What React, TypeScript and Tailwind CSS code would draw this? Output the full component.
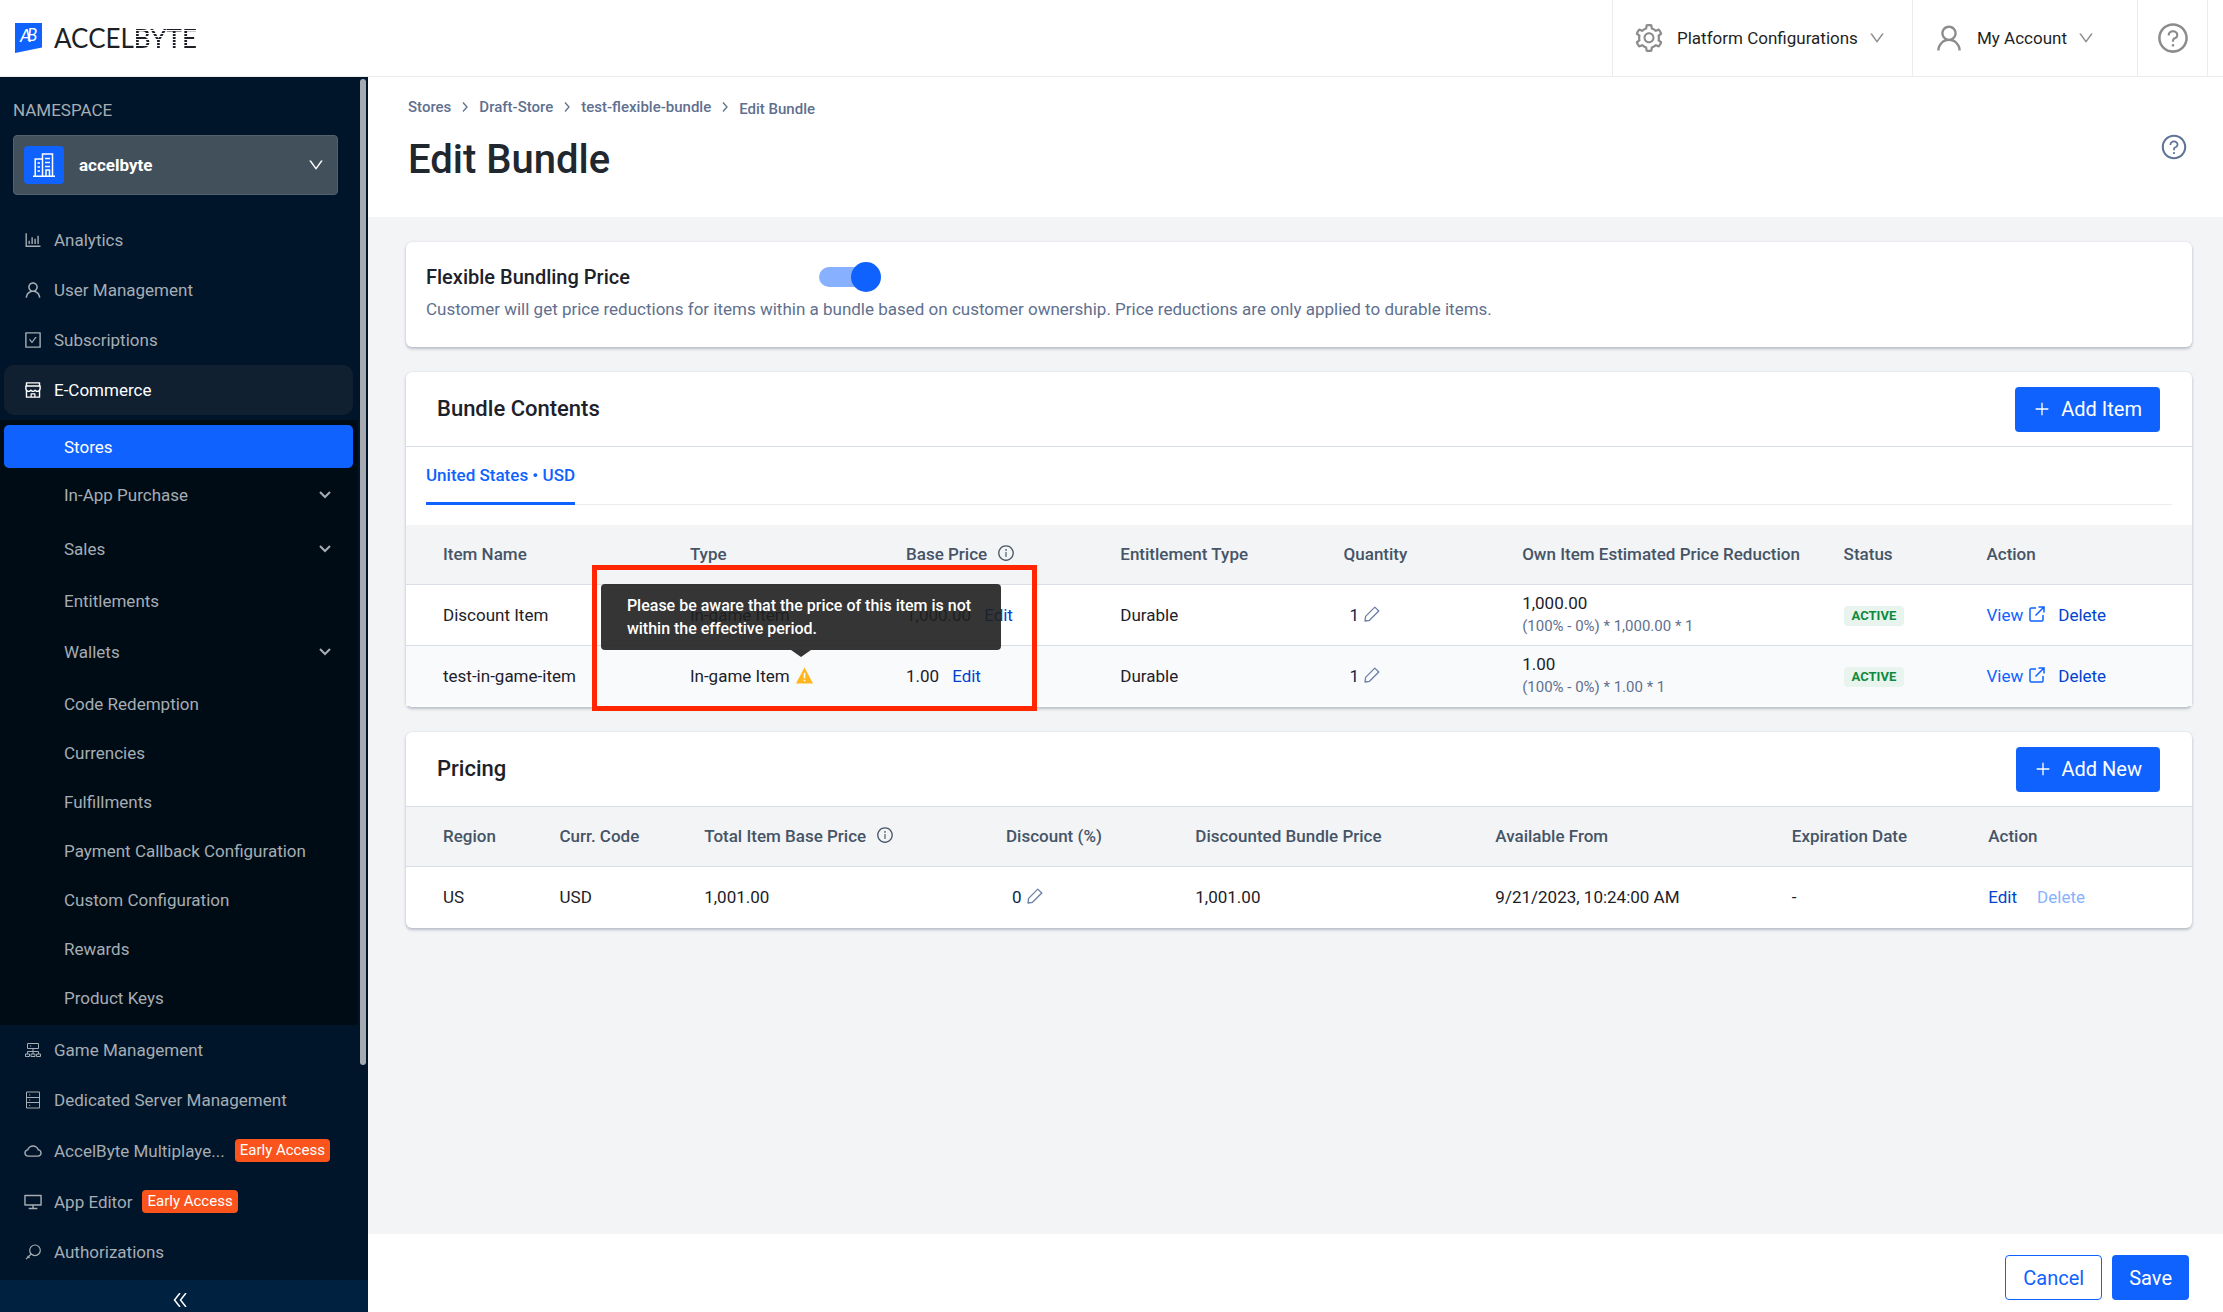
import type { ReactNode } from "react";
import {
  AiOutlineBarChart,
  AiOutlineUser,
  AiOutlineCheckSquare,
  AiOutlineShop,
  AiOutlineCloud,
  AiOutlineDesktop,
  AiOutlineInfoCircle,
  AiOutlineQuestionCircle,
  AiOutlineSetting,
  AiOutlinePlus,
  AiOutlineDown,
} from "react-icons/ai";

function BuildingIcon() {
  return (
    <svg viewBox="0 0 22 24" className="h-6 w-[22px]" fill="none" stroke="currentColor" strokeWidth="1.5">
      <path d="M0 23.2h22M2.2 23V6H9M9.5 23V1h10v22M13 23v-6h3.5v6M12 5.5h5M12 9.5h5M12 13.5h5M4.500 10h2.500M4.500 14h2.500M4.500 18h2.500" />
    </svg>
  );
}

function ClusterIcon() {
  return (
    <svg viewBox="0 0 16 16" className="h-4 w-4" fill="none" stroke="currentColor">
      <path d="M2.500 1.500h11v5h-11zM8 6.500V12M2.500 12V9.500h11V12M.5 12h4v2.500h-4zM6 12h4v2.500H6zM11.500 12h4v2.500h-4zM5 4h1.200" />
    </svg>
  );
}

function ServerIcon() {
  return (
    <svg viewBox="0 0 16 18" className="h-[18px] w-4" fill="none" stroke="currentColor">
      <path d="M1.500 1h13v16h-13zM1.500 6.500h13M1.500 11.500h13M4 4h1.200M4 9h1.200M4 14.300h1.200" />
    </svg>
  );
}

function KeyIcon() {
  return (
    <svg viewBox="0 0 16 16" className="h-4 w-4" fill="none" stroke="currentColor" strokeWidth="1.200">
      <circle cx="10" cy="6.300" r="5.300" />
      <path d="M6.200 10L1 15.200M2.500 12l2 2" />
    </svg>
  );
}

function SmallChevron() {
  return (
    <svg viewBox="0 0 12 8" className="h-2 w-3" fill="none" stroke="currentColor" strokeWidth="2">
      <path d="M1 1l5 5 5-5" />
    </svg>
  );
}

function PencilIcon() {
  return (
    <svg viewBox="0 0 16 16" className="mb-[2px] h-4 w-4 text-[#6b7fa8]" fill="none" stroke="currentColor" strokeWidth="1.300">
      <path d="M1 15l.6-4.600 9.200-9.300 4 3.900-9.300 9.300z" strokeLinejoin="round" />
    </svg>
  );
}

function ExternalIcon() {
  return (
    <svg viewBox="0 0 16 16" className="mb-[2px] h-4 w-4" fill="none" stroke="currentColor" strokeWidth="1.500">
      <path d="M7 2H2.200Q1 2 1 3.200v10.600Q1 15 2.200 15h10.600q1.200 0 1.200-1.200V9M9.500 1H15v5.500M15 1L6.500 9.500" />
    </svg>
  );
}

function WarningIcon() {
  return (
    <svg viewBox="0 0 16 16" className="h-[17px] w-[17px]">
      <path d="M8 .5L16 15.500H0z" fill="#ffb61e" />
      <path d="M8 5.500v5M8 12v1.500" stroke="#fff" strokeWidth="1.500" />
    </svg>
  );
}

function Logo() {
  return (
    <a href="#" className="flex items-center gap-3 pl-[15px] text-[#1c1f26]">
      <svg viewBox="0 0 27 30" className="h-[30px] w-[27px]" aria-hidden="true">
        <path d="M0 0h27v24.500L0 30z" fill="#0f62fe" />
        <text x="5" y="19" fontSize="18" fontFamily="Lato" fontStyle="italic" fill="#fff">A</text>
        <text x="12" y="18" fontSize="17" fontFamily="Lato" fontStyle="italic" fill="#fff">B</text>
      </svg>
      <span className="font-[Lato,sans-serif] text-[26px] leading-8">
        ACCEL
        <span className="bg-[repeating-linear-gradient(#1c1f26_0_2px,#ffffff_2px_3px)] bg-clip-text font-medium text-transparent">
          BYTE
        </span>
      </span>
    </a>
  );
}

function TopBar() {
  return (
    <header className="flex h-[77px] shrink-0 items-stretch border-b border-[#ececec] bg-white">
      <Logo />
      <div className="ml-auto flex pr-[15px] text-[#1f1f1f]">
        <button className="flex w-[300px] items-center border-l border-[#ececec] pl-5">
          <AiOutlineSetting className="h-8 w-8 text-[#8c8c8c]" />
          <span className="ml-3">Platform Configurations</span>
          <AiOutlineDown className="ml-[10px] h-[18px] w-[18px] text-[#8c8c8c]" />
        </button>
        <button className="flex w-[225px] items-center border-l border-[#ececec] pl-5">
          <AiOutlineUser className="h-8 w-8 text-[#8c8c8c]" />
          <span className="ml-3">My Account</span>
          <AiOutlineDown className="ml-[10px] h-[18px] w-[18px] text-[#8c8c8c]" />
        </button>
        <button aria-label="Help" className="flex w-[71px] items-center justify-center border-x border-[#ececec]">
          <AiOutlineQuestionCircle className="h-[34px] w-[34px] text-[#8c8c8c]" />
        </button>
      </div>
    </header>
  );
}

const subItems = [
  { label: "In-App Purchase", expandable: true },
  { label: "Sales", expandable: true },
  { label: "Entitlements" },
  { label: "Wallets", expandable: true },
  { label: "Code Redemption" },
  { label: "Currencies" },
  { label: "Fulfillments" },
  { label: "Payment Callback Configuration" },
  { label: "Custom Configuration" },
  { label: "Rewards" },
  { label: "Product Keys" },
];

function MenuItem({ icon, label, early = false }: { icon: ReactNode; label: string; early?: boolean }) {
  return (
    <a href="#" className={early ? "flex h-[51px] items-center pl-[23px]" : "flex h-[50px] items-center pl-[23px]"}>
      <span className="flex w-5 justify-center">{icon}</span>
      <span className="ml-[11px]">{label}</span>
      {early && (
        <span className="ml-[10px] rounded bg-[#fa541c] px-[5px] text-[15px] leading-[23px] text-white">
          Early Access
        </span>
      )}
    </a>
  );
}

function Sidebar() {
  return (
    <aside className="flex w-[368px] shrink-0 flex-col bg-[#001529] text-[#a6adb4]">
      <div className="flex min-h-0 flex-1 justify-between overflow-hidden">
        <div className="w-[358px]">
          <div className="px-[13px] pt-[21px]">
            <p className="leading-6">NAMESPACE</p>
            <button className="mt-[13px] flex h-[60px] w-[325px] items-center rounded border border-[#53616e] bg-[#42505c] pr-3 pl-[10px] text-white">
              <span className="flex h-[38px] w-10 items-center justify-center rounded-sm bg-[#0f62fe]">
                <BuildingIcon />
              </span>
              <span className="ml-[15px] font-bold">accelbyte</span>
              <AiOutlineDown className="ml-auto h-[18px] w-[18px]" />
            </button>
          </div>
          <nav className="mt-5">
            <MenuItem icon={<AiOutlineBarChart className="h-5 w-5" />} label="Analytics" />
            <MenuItem icon={<AiOutlineUser className="h-5 w-5" />} label="User Management" />
            <MenuItem icon={<AiOutlineCheckSquare className="h-5 w-5" />} label="Subscriptions" />
            <a
              href="#"
              className="mr-[5px] ml-1 flex h-[50px] items-center rounded-[10px] bg-[#112031] pl-[19px] text-white"
            >
              <AiOutlineShop className="h-5 w-5" />
              <span className="ml-[11px]">E-Commerce</span>
            </a>
            <div className="mt-[5px] bg-[#000c15] pt-[5px] pb-[3px]">
              <a
                href="#"
                className="mr-[5px] ml-1 flex h-[43px] items-center rounded-[5px] bg-[#0f62fe] pl-[60px] text-white"
              >
                Stores
              </a>
              {subItems.map((item) => (
                <a
                  key={item.label}
                  href="#"
                  className={
                    item.expandable
                      ? "flex h-[54px] items-center justify-between pr-[27px] pl-16"
                      : "flex h-[49px] items-center pl-16"
                  }
                >
                  {item.label}
                  {item.expandable && <SmallChevron />}
                </a>
              ))}
            </div>
            <MenuItem icon={<ClusterIcon />} label="Game Management" />
            <MenuItem icon={<ServerIcon />} label="Dedicated Server Management" />
            <MenuItem icon={<AiOutlineCloud className="h-5 w-5" />} label="AccelByte Multiplaye..." early />
            <MenuItem icon={<AiOutlineDesktop className="h-5 w-5" />} label="App Editor" early />
            <MenuItem icon={<KeyIcon />} label="Authorizations" />
          </nav>
        </div>
        <div className="mt-[2px] mr-[2px] h-[82%] w-[6px] rounded-full bg-[#a5abb1]" />
      </div>
      <button aria-label="Collapse" className="flex h-8 shrink-0 items-center justify-center bg-[#002140] pt-2 pr-2 text-white">
        <svg viewBox="0 0 14 14" className="h-[14px] w-[14px]" fill="none" stroke="currentColor" strokeWidth="1.500">
          <path d="M7 0L1.500 7 7 14M13 0L7.500 7l5.500 7" />
        </svg>
      </button>
    </aside>
  );
}

function Crumb({ label }: { label: string }) {
  return (
    <>
      <a href="#">{label}</a>
      <svg viewBox="0 0 6 10" className="mx-[11px] h-[10px] w-[6px]" fill="none" stroke="currentColor" strokeWidth="1.300">
        <path d="M1 .5L5 5 1 9.500" />
      </svg>
    </>
  );
}

function PageHeader() {
  return (
    <div className="flex h-[140px] shrink-0 justify-between bg-white pr-[35px] pl-10">
      <div>
        <nav className="mt-[18px] flex items-center text-[15px] leading-5 font-medium text-[#5f708f]">
          <Crumb label="Stores" />
          <Crumb label="Draft-Store" />
          <Crumb label="test-flexible-bundle" />
          <span className="pt-1">Edit Bundle</span>
        </nav>
        <h1 className="mt-4 text-[40px] leading-[50px] font-medium text-[#21272e]">Edit Bundle</h1>
      </div>
      <button aria-label="Page help" className="mt-14 h-7 w-7 text-[#5f7396]">
        <AiOutlineQuestionCircle className="h-7 w-7" />
      </button>
    </div>
  );
}

function Card({ children }: { children: ReactNode }) {
  return (
    <section className="mb-[25px] rounded-md bg-white pb-px shadow-[0_2px_3px_#b9bec8,0_0_2px_#d5d8df]">
      {children}
    </section>
  );
}

function CardHeader({ title, action }: { title: string; action: string }) {
  return (
    <div className="flex h-[75px] items-center justify-between border-b border-[#d9dde5] pr-8 pl-[31px]">
      <h2 className="text-[22px] font-medium">{title}</h2>
      <button className="flex h-[45px] items-center gap-[10px] rounded bg-[#0f62fe] px-[18px] text-xl text-white">
        <AiOutlinePlus className="h-[18px] w-[18px]" />
        {action}
      </button>
    </div>
  );
}

function Th({ children, first = false }: { children: ReactNode; first?: boolean }) {
  return (
    <th className={first ? "h-[59px] pl-[37px] font-medium" : "h-[59px] pl-4 font-medium"}>
      <span className="flex items-center whitespace-nowrap">{children}</span>
    </th>
  );
}

function Editable({ value, label }: { value: string; label: string }) {
  return (
    <button aria-label={label} className="ml-[6px] flex items-center gap-[5px] text-[#0b1f4d]">
      {value}
      <PencilIcon />
    </button>
  );
}

const items = [
  { name: "Discount Item", price: "1,000.00", formula: "(100% - 0%) * 1,000.00 * 1" },
  { name: "test-in-game-item", price: "1.00", formula: "(100% - 0%) * 1.00 * 1", warning: true },
];

function PriceWarning() {
  return (
    <>
      <div
        role="tooltip"
        className="absolute bottom-[56px] -left-[73px] z-10 w-[400px] rounded bg-[#1f1f1f]/90 px-[26px] py-[10px] text-base leading-[23px] font-medium text-white"
      >
        Please be aware that the price of this item is not within the effective period.
        <svg viewBox="0 0 20 7" className="absolute top-full left-[190px] h-[7px] w-5">
          <path d="M0 0h20L10 7z" fill="#1f1f1f" fillOpacity=".9" />
        </svg>
      </div>
      <div className="pointer-events-none absolute -top-[81px] -left-[82px] z-20 h-[146px] w-[445px] border-[5px] border-[#ff2600]" />
    </>
  );
}

function BundleTable() {
  return (
    <table className="w-full table-fixed text-left">
      <colgroup>
        <col className="w-[15%]" />
        <col className="w-[12.1%]" />
        <col className="w-[12%]" />
        <col className="w-[12.5%]" />
        <col className="w-[10%]" />
        <col className="w-[18%]" />
        <col className="w-[8%]" />
        <col />
      </colgroup>
      <thead className="border-b border-[#d9dde5] bg-[#f3f4f6] text-[#465467]">
        <tr>
          <Th first>Item Name</Th>
          <Th>Type</Th>
          <Th>
            Base Price
            <AiOutlineInfoCircle className="mb-[3px] ml-[10px] h-[18px] w-[18px]" />
          </Th>
          <Th>Entitlement Type</Th>
          <Th>Quantity</Th>
          <Th>Own Item Estimated Price Reduction</Th>
          <Th>Status</Th>
          <Th>Action</Th>
        </tr>
      </thead>
      <tbody>
        {items.map((item) => (
          <tr key={item.name} className="h-[61px] border-b border-[#d9dde5] last:border-b-0 last:bg-[#f9fafc]">
            <td className="pl-[37px]">{item.name}</td>
            <td className="relative pl-4">
              <span className="flex items-center gap-[6px] whitespace-nowrap">
                In-game Item
                {item.warning && <WarningIcon />}
              </span>
              {item.warning && <PriceWarning />}
            </td>
            <td className="pl-4">
              {item.price}
              <button className="ml-[13px] text-[#0043ce]">Edit</button>
            </td>
            <td className="pl-4">Durable</td>
            <td className="pl-4">
              <Editable value="1" label={"Edit quantity of " + item.name} />
            </td>
            <td className="pl-4 whitespace-nowrap">
              <div className="leading-[23px]">{item.price}</div>
              <div className="text-[15px] leading-[22px] text-[#5f708f]">{item.formula}</div>
            </td>
            <td className="pl-4">
              <span className="inline-block rounded-sm bg-[#e8f4ed] px-2 align-middle text-[13px] leading-5 font-bold text-[#0e8a3e]">
                ACTIVE
              </span>
            </td>
            <td className="pl-4">
              <div className="flex items-center">
                <a href="#" className="flex items-center gap-[6px] text-[#0f62fe]">
                  View
                  <ExternalIcon />
                </a>
                <button className="ml-[13px] text-[#0043ce]">Delete</button>
              </div>
            </td>
          </tr>
        ))}
      </tbody>
    </table>
  );
}

function PricingTable() {
  return (
    <table className="w-full table-fixed text-left">
      <colgroup>
        <col className="w-[7.7%]" />
        <col className="w-[8.1%]" />
        <col className="w-[16.9%]" />
        <col className="w-[10.6%]" />
        <col className="w-[16.8%]" />
        <col className="w-[16.6%]" />
        <col className="w-[11%]" />
        <col />
      </colgroup>
      <thead className="border-b border-[#d9dde5] bg-[#f3f4f6] text-[#465467]">
        <tr>
          <Th first>Region</Th>
          <Th>Curr. Code</Th>
          <Th>
            Total Item Base Price
            <AiOutlineInfoCircle className="mb-[3px] ml-[10px] h-[18px] w-[18px]" />
          </Th>
          <Th>Discount (%)</Th>
          <Th>Discounted Bundle Price</Th>
          <Th>Available From</Th>
          <Th>Expiration Date</Th>
          <Th>Action</Th>
        </tr>
      </thead>
      <tbody>
        <tr className="h-[61px]">
          <td className="pl-[37px]">US</td>
          <td className="pl-4">USD</td>
          <td className="pl-4">1,001.00</td>
          <td className="pl-4">
            <Editable value="0" label="Edit discount" />
          </td>
          <td className="pl-4">1,001.00</td>
          <td className="pl-4">9/21/2023, 10:24:00 AM</td>
          <td className="pl-4">-</td>
          <td className="pl-4">
            <button className="text-[#0043ce]">Edit</button>
            <button disabled className="ml-5 text-[#87b1ff]">
              Delete
            </button>
          </td>
        </tr>
      </tbody>
    </table>
  );
}

function App() {
  return (
    <div className="flex h-screen flex-col font-[Roboto,sans-serif] text-[17px] leading-7 text-[#1d2129]">
      <TopBar />
      <div className="flex min-h-0 flex-1">
        <Sidebar />
        <main className="flex min-w-0 flex-1 flex-col bg-[#f3f4f6]">
          <PageHeader />
          <div className="min-h-0 flex-1 pt-[25px] pr-[31px] pl-[38px]">
            <Card>
              <div className="h-[104px] px-5 pt-5">
                <div className="flex items-center">
                  <label htmlFor="flexible" className="w-[393px] text-xl leading-[30px] font-medium">
                    Flexible Bundling Price
                  </label>
                  <span className="relative flex h-[30px] w-[62px] items-center">
                    <input id="flexible" type="checkbox" role="switch" defaultChecked className="peer absolute inset-0 opacity-0" />
                    <span className="h-5 w-[50px] rounded-full bg-[#87b1ff]" />
                    <span className="pointer-events-none absolute right-0 h-[30px] w-[30px] rounded-full bg-[#0f62fe]" />
                  </span>
                </div>
                <p className="mt-[2px] leading-[30px] text-[#5f708f]">
                  Customer will get price reductions for items within a bundle based on customer ownership. Price
                  reductions are only applied to durable items.
                </p>
              </div>
            </Card>
            <Card>
              <CardHeader title="Bundle Contents" action="Add Item" />
              <div className="mx-5 mb-5 flex border-b border-[#ebedf0]" role="tablist">
                <button
                  role="tab"
                  aria-selected="true"
                  className="-mb-px h-[58px] border-b-[3px] border-[#0f62fe] font-medium text-[#0f62fe]"
                >
                  United States • USD
                </button>
              </div>
              <BundleTable />
            </Card>
            <Card>
              <CardHeader title="Pricing" action="Add New" />
              <PricingTable />
            </Card>
          </div>
          <footer className="flex h-[78px] shrink-0 justify-end gap-[10px] bg-white pt-[21px] pr-[34px] text-xl">
            <button className="h-[45px] rounded border border-[#0f62fe] px-[17px] text-[#0f62fe]">Cancel</button>
            <button className="h-[45px] rounded bg-[#0f62fe] px-[17px] text-white">Save</button>
          </footer>
        </main>
      </div>
    </div>
  );
}

export default App;
